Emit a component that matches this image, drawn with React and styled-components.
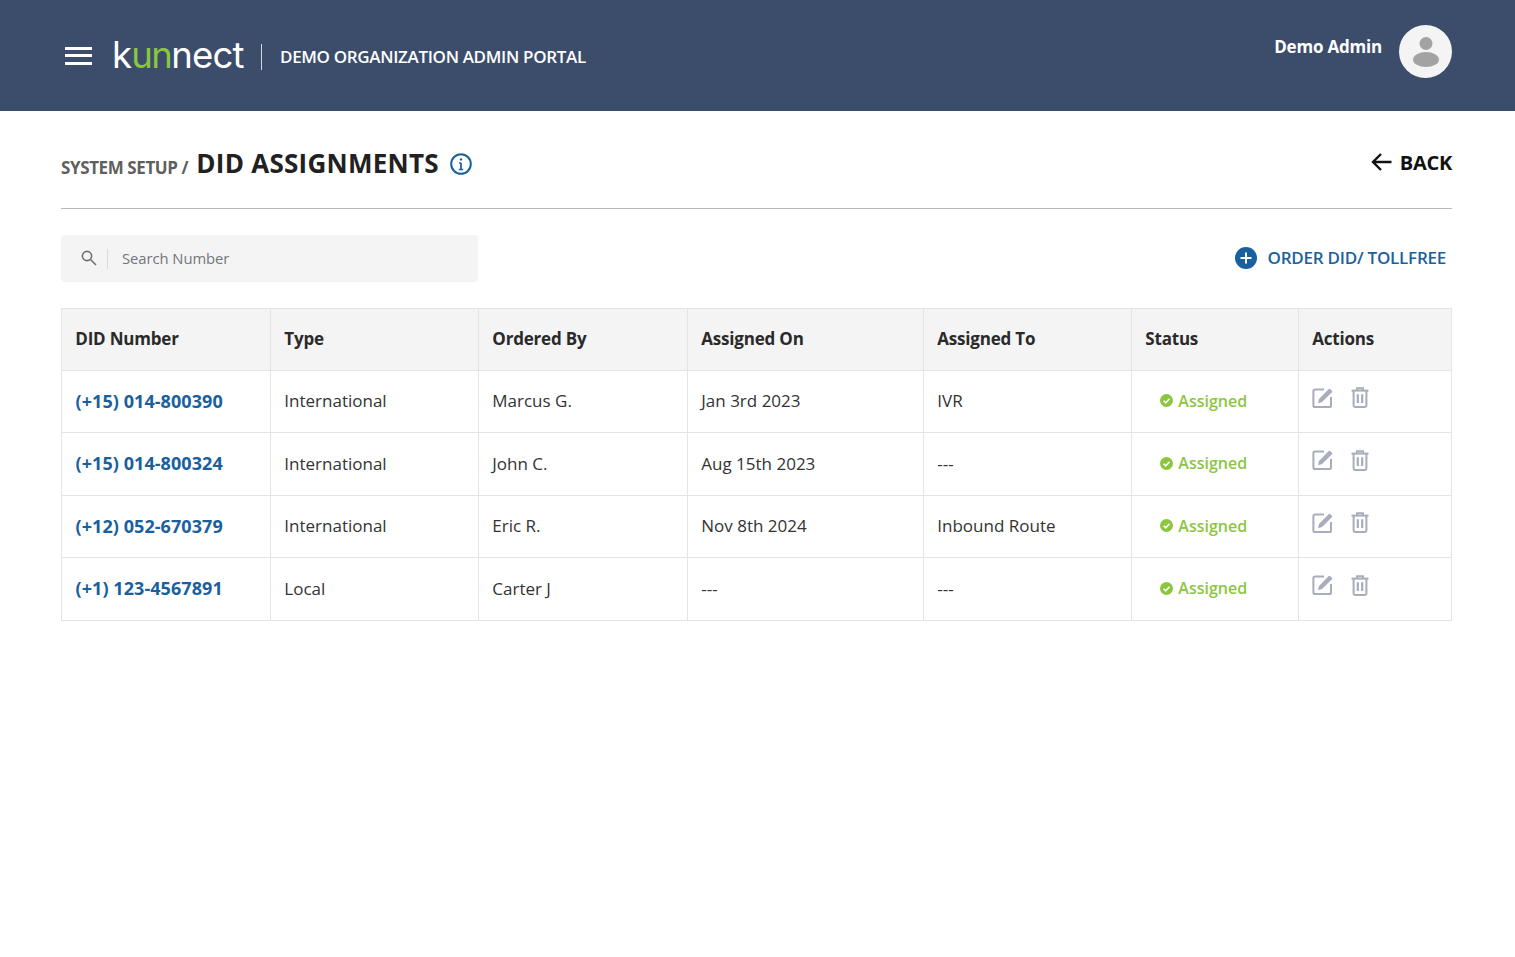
import React from "react";
import styled, { createGlobalStyle } from "styled-components";

const Global = createGlobalStyle`
  html, body { margin: 0; padding: 0; background: #fff; }
  body { font-family: "Open Sans", "Liberation Sans", sans-serif; color: #212121; }
  * { box-sizing: border-box; }
`;

const Header = styled.header`
  height: 111px;
  background: #3b4d6b;
  display: flex;
  align-items: flex-start;
  justify-content: space-between;
  padding: 25px 63px 0 65px;
  color: #fff;
`;
const Brand = styled.div`
  display: flex;
  align-items: center;
  height: 62px;
`;
const Burger = styled.button`
  width: 27px;
  height: 18px;
  padding: 0;
  border: 0;
  background: none;
  display: flex;
  flex-direction: column;
  justify-content: space-between;
  margin: -1px 21px 0 0;
  span { display: block; height: 3px; background: #fff; }
`;
const Logo = styled.div`
  font-family: "Inter", sans-serif;
  font-weight: 400;
  font-size: 36.5px;
  letter-spacing: -0.8px;
  line-height: 1;
  color: #fff;
  width: 131px;
  margin-left: -1px;
  margin-right: 1px;
  white-space: nowrap;
  margin-top: -1px;
`;
const Green = styled.span`
  color: #8cc63f;
  letter-spacing: -1.6px;
`;
const Divider = styled.div`
  width: 1px;
  height: 26px;
  background: #cfd4dc;
  margin: 2px 18px 0 17px;
`;
const Portal = styled.div`
  font-size: 17px;
  font-weight: 600;
  letter-spacing: -0.33px;
`;
const User = styled.div`
  display: flex;
  align-items: center;
  gap: 17px;
`;
const UserName = styled.div`
  font-size: 17px;
  font-weight: 700;
  letter-spacing: -0.2px;
  margin-top: -11px;
`;
const Avatar = styled.div`
  width: 53px;
  height: 53px;
  border-radius: 50%;
  background: #f4f4f4;
  display: flex;
  align-items: center;
  justify-content: center;
`;

const Main = styled.main`
  padding: 0 63px 0 61px;
`;
const TitleBar = styled.div`
  height: 98px;
  border-bottom: 1px solid #b9b9b9;
  display: flex;
  justify-content: space-between;
  align-items: flex-start;
  padding-top: 34px;
`;
const Crumbs = styled.div`
  display: flex;
  align-items: center;
  height: 38px;
`;
const Crumb = styled.span`
  font-size: 17px;
  font-weight: 700;
  color: #5f5f5f;
  letter-spacing: -0.4px;
  margin: 6px 8px 0 0;
`;
const Title = styled.h1`
  margin: -3px 11px 0 0;
  font-size: 26px;
  font-weight: 700;
  color: #212121;
  line-height: 38px;
  letter-spacing: 0.27px;
`;
const Back = styled.a`
  display: flex;
  align-items: center;
  gap: 8px;
  height: 38px;
  margin-top: -2px;
  font-size: 20px;
  font-weight: 700;
  color: #111;
  letter-spacing: -0.25px;
`;
const Tools = styled.div`
  display: flex;
  justify-content: space-between;
  align-items: center;
  margin: 26px 0;
  height: 47px;
`;
const Search = styled.div`
  width: 417px;
  height: 47px;
  border-radius: 4px;
  background: #f4f4f4;
  display: flex;
  align-items: center;
  padding-left: 20px;
`;
const SearchRule = styled.div`
  width: 1px;
  height: 20px;
  background: #d9d9d9;
  margin: 0 14px 0 10px;
`;
const SearchInput = styled.input`
  border: 0;
  outline: 0;
  background: none;
  flex: 1;
  font: 400 14.8px "Open Sans", sans-serif;
  padding: 0 0 2px;
  letter-spacing: -0.05px;
  &::placeholder { color: #72767b; opacity: 1; }
`;
const OrderLink = styled.a`
  display: flex;
  align-items: center;
  gap: 11px;
  padding-right: 6px;
  margin-top: -1px;
  font-size: 17px;
  font-weight: 600;
  letter-spacing: -0.24px;
  color: #1a5f9e;
  span { margin-top: -1px; }
`;
const Table = styled.table`
  width: 1391px;
  table-layout: fixed;
  border-collapse: collapse;
  font-size: 17px;
`;
const Col = styled.col`
  width: ${(p) => p.$w}px;
`;
const Th = styled.th`
  height: 61.5px;
  padding: 0 13.3px 1px;
  text-align: left;
  background: #f4f4f4;
  border: 1px solid #e4e4e4;
  font-size: 17px;
  font-weight: 700;
  color: #2a2a2a;
  letter-spacing: -0.2px;
`;
const Td = styled.td`
  height: 62.5px;
  padding: 0 13.3px 1px;
  border: 1px solid #e4e4e4;
  color: #333;
  white-space: nowrap;
`;
const NumberCell = styled(Td)`
  font-size: 18px;
  font-weight: 700;
  letter-spacing: 0.07px;
  color: #1a5f9e;
  padding-left: 13.5px;
`;
const Status = styled.div`
  display: flex;
  align-items: center;
  gap: 5px;
  padding-left: 15px;
  font-size: 16px;
  font-weight: 600;
  color: #8cc63f;
`;
const Actions = styled.div`
  display: flex;
  align-items: center;
  gap: 17px;
  margin-top: -6px;
`;

const rows = [
  ["(+15) 014-800390", "International", "Marcus G.", "Jan 3rd 2023", "IVR"],
  ["(+15) 014-800324", "International", "John C.", "Aug 15th 2023", "---"],
  ["(+12) 052-670379", "International", "Eric R.", "Nov 8th 2024", "Inbound Route"],
  ["(+1) 123-4567891", "Local", "Carter J", "---", "---"],
];

const SearchIcon = () => (
  <svg width="16" height="16" viewBox="0 0 16 16" fill="none" stroke="#6f6f6f" strokeWidth="1.6" style={{ flex: "none", marginTop: -2 }}>
    <circle cx="6" cy="6" r="4.6" />
    <path d="M9.5 9.5L15 15" />
  </svg>
);
const EditIcon = () => (
  <svg width="22" height="22" viewBox="0 0 22 22" fill="none">
    <path d="M12 2.5H3a1.6 1.6 0 0 0-1.6 1.6v14.3A1.6 1.6 0 0 0 3 20h14.4a1.6 1.6 0 0 0 1.6-1.6V10" stroke="#a7adba" strokeWidth="2" />
    <path d="M6 16.2l1-4.2L16.8 2.1a1 1 0 0 1 1.4 0l1.7 1.7a1 1 0 0 1 0 1.4L10.1 15.1z" fill="#a7adba" />
  </svg>
);
const TrashIcon = () => (
  <svg width="18" height="21" viewBox="0 0 18 21" fill="none" stroke="#a7adba" strokeWidth="2">
    <path d="M0.5 3.6H17.5" />
    <path d="M6 3.4V1.2H12V3.4" />
    <path d="M2.6 3.6V18.6a1.4 1.4 0 0 0 1.4 1.4h10a1.4 1.4 0 0 0 1.4-1.4V3.6" />
    <path d="M6.8 7.2V16M11.2 7.2V16" strokeWidth="2.2" />
  </svg>
);
const CheckIcon = () => (
  <svg width="13" height="13" viewBox="0 0 13 13">
    <circle cx="6.5" cy="6.5" r="6.5" fill="#8cc63f" />
    <path d="M3.6 6.7l2.1 2.1 3.8-4" fill="none" stroke="#fff" strokeWidth="1.6" />
  </svg>
);

export default function App() {
  return (
    <>
      <Global />
      <Header>
        <Brand>
          <Burger aria-label="Menu"><span /><span /><span /></Burger>
          <Logo>k<Green>un</Green>nect</Logo>
          <Divider />
          <Portal>DEMO ORGANIZATION ADMIN PORTAL</Portal>
        </Brand>
        <User>
          <UserName>Demo Admin</UserName>
          <Avatar>
            <svg width="26" height="30" viewBox="0 0 26 30" fill="#a3a3a3">
              <circle cx="13" cy="6.5" r="6.5" />
              <ellipse cx="13" cy="22.5" rx="13" ry="7.5" />
            </svg>
          </Avatar>
        </User>
      </Header>
      <Main>
        <TitleBar>
          <Crumbs>
            <Crumb>SYSTEM SETUP /</Crumb>
            <Title>DID ASSIGNMENTS</Title>
            <svg width="22" height="22" viewBox="0 0 22 22" fill="none" stroke="#1a5f9e" strokeWidth="2">
              <circle cx="11" cy="11" r="9.8" />
              <path d="M11 10v6.5M8.8 16.5h4.4M9 10h2" strokeWidth="1.7" />
              <circle cx="11" cy="6.4" r="1.2" fill="#1a5f9e" stroke="none" />
            </svg>
          </Crumbs>
          <Back>
            <svg width="21" height="20" viewBox="0 0 21 20" fill="none" stroke="#111" strokeWidth="2.4">
              <path d="M20.5 10H2.5M10 2L2 10l8 8" />
            </svg>
            BACK
          </Back>
        </TitleBar>
        <Tools>
          <Search>
            <SearchIcon />
            <SearchRule />
            <SearchInput placeholder="Search Number" />
          </Search>
          <OrderLink>
            <svg width="22" height="22" viewBox="0 0 22 22">
              <circle cx="11" cy="11" r="11" fill="#1a5f9e" />
              <path d="M11 5.5v11M5.5 11h11" stroke="#fff" strokeWidth="2" />
            </svg>
            <span>ORDER DID/ TOLLFREE</span>
          </OrderLink>
        </Tools>
        <Table>
          <colgroup>
            {[209, 208, 209, 236, 208, 167, 153].map((w, i) => <Col key={i} $w={w} />)}
          </colgroup>
          <thead>
            <tr>
              {["DID Number", "Type", "Ordered By", "Assigned On", "Assigned To", "Status", "Actions"].map((h) => <Th key={h}>{h}</Th>)}
            </tr>
          </thead>
          <tbody>
            {rows.map((r) => (
              <tr key={r[0]}>
                <NumberCell>{r[0]}</NumberCell>
                <Td>{r[1]}</Td>
                <Td>{r[2]}</Td>
                <Td>{r[3]}</Td>
                <Td>{r[4]}</Td>
                <Td>
                  <Status><CheckIcon />Assigned</Status>
                </Td>
                <Td>
                  <Actions><EditIcon /><TrashIcon /></Actions>
                </Td>
              </tr>
            ))}
          </tbody>
        </Table>
      </Main>
    </>
  );
}
